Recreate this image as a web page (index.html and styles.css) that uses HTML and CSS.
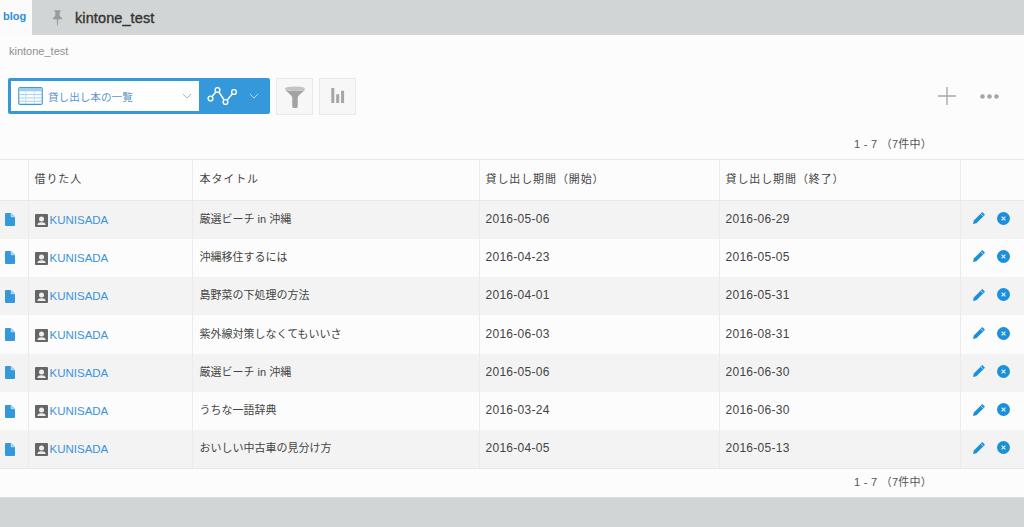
FILE: index.html
```html
<!DOCTYPE html>
<html lang="ja">
<head>
<meta charset="utf-8">
<title>kintone_test</title>
<link rel="stylesheet" href="styles.css">
</head>
<body>
<svg class="defs" width="0" height="0" aria-hidden="true">
  <defs>
    <symbol id="doc" viewBox="0 0 10 13"><path d="M0 1a1 1 0 0 1 1-1h5l4 4v8a1 1 0 0 1-1 1H1a1 1 0 0 1-1-1z" fill="#3498db"/><path d="M6.2 0v3.8H10" fill="#9fd0f0" stroke="#fff" stroke-width=".5"/></symbol>
    <symbol id="user" viewBox="0 0 13 13"><rect width="13" height="13" rx="1" fill="#666"/><circle cx="6.5" cy="5" r="2.5" fill="#eee"/><path d="M2.3 11c.2-2 2-2.700 4.200-2.700s4 .7 4.200 2.700z" fill="#eee"/></symbol>
    <symbol id="pencil" viewBox="0 0 14 14"><path d="M10.300 1l2.700 2.700-8.600 8.500-3.400.8.800-3.400z" fill="#1a90dc"/><path d="M9 2.900l2.100 2.100" stroke="#fff" stroke-width=".7"/></symbol>
    <symbol id="del" viewBox="0 0 13 13"><circle cx="6.500" cy="6.500" r="6.500" fill="#1a90dc"/><path d="M4.600 4.600l3.800 3.800m0-3.800l-3.800 3.800" stroke="#dff0fb" stroke-width="1.200"/></symbol>
  </defs>
</svg>
<header class="topbar">
  <div class="tab-blog">blog</div>
  <svg class="pin" width="11" height="18" viewBox="0 0 14 22"><path d="M3 1h8v1.500L9.800 3.500v5l3 2.500v1.500H8L7.400 21h-.8L6 12.500H1.200V11l3-2.500v-5L3 2.500z" fill="#9a9c9c"/></svg>
  <div class="app-title">kintone_test</div>
</header>
<main class="content">
  <div class="crumb">kintone_test</div>
  <div class="toolbar">
    <div class="view-switch">
      <div class="view-select">
        <svg class="grid-icon" width="25" height="18" viewBox="0 0 26 19"><rect x=".6" y=".6" width="24.800" height="17.800" rx="1.500" fill="#fff" stroke="#3498db" stroke-width="1.200"/><rect x="1" y="1" width="24" height="3.500" fill="#9fcdee"/><path d="M1 8h24M1 11.500h24M1 15h24" stroke="#9fcdee"/><path d="M8 4v14M17 4v14" stroke="#b9dbf3"/></svg>
        <span class="view-name">貸し出し本の一覧</span>
        <svg class="chev" width="10" height="6" viewBox="0 0 12 7"><path d="M1 1l5 5 5-5" fill="none" stroke="#6eb1e4" stroke-width="1"/></svg>
      </div>
      <div class="graph-select">
        <svg width="32" height="20" viewBox="0 0 32 20"><path d="M3 13L10.500 4 18.500 16 27 6" fill="none" stroke="#fff" stroke-width="1.400"/><g fill="#3498db" stroke="#fff" stroke-width="1.400"><circle cx="3.500" cy="12.500" r="2.400"/><circle cx="10.500" cy="4" r="2.400"/><circle cx="18.500" cy="16" r="2.400"/><circle cx="27" cy="6" r="2.400"/></g></svg>
        <svg class="chev" width="10" height="6" viewBox="0 0 12 7"><path d="M1 1l5 5 5-5" fill="none" stroke="#d4e8f7" stroke-width="1"/></svg>
      </div>
    </div>
    <button class="tool-btn" aria-label="filter"><svg width="22" height="23" viewBox="0 0 24 24"><ellipse cx="12" cy="3.500" rx="11" ry="2.500" fill="#c4c4c4"/><path d="M1 4.500C3 6.500 9 11 9 13v9a1.500 1.500 0 0 0 6 0v-9c0-2 6-6.500 8-8.500-4 2-18 2-22 0z" fill="#a3a3a3"/></svg></button>
    <button class="tool-btn" aria-label="graph"><svg width="15" height="16" viewBox="0 0 16 18"><path d="M1 0h3.400v17H1zM6.500 7h3.400v10H6.500zM12 3h3.400v14H12z" fill="#a6a6a6"/></svg></button>
    <div class="tool-right">
      <svg width="18" height="18" viewBox="0 0 18 18"><path d="M9 0v18M0 9h18" stroke="#a6a6a6" stroke-width="1.300"/></svg>
      <svg width="19" height="5" viewBox="0 0 19 5"><g fill="#a6a6a6"><circle cx="2.500" cy="2.500" r="2.300"/><circle cx="9.500" cy="2.500" r="2.300"/><circle cx="16.500" cy="2.500" r="2.300"/></g></svg>
    </div>
  </div>
  <div class="pager pager-top">1 - 7 （7件中）</div>
  <table class="records">
    <colgroup><col class="c0"><col class="c1"><col class="c2"><col class="c3"><col class="c4"><col class="c5"></colgroup>
    <thead>
      <tr><th></th><th>借りた人</th><th class="title">本タイトル</th><th>貸し出し期間（開始）</th><th>貸し出し期間（終了）</th><th></th></tr>
    </thead>
    <tbody>
      <tr><td class="ic"><svg class="doc"><use href="#doc"/></svg></td><td class="who"><span class="person"><svg class="avatar"><use href="#user"/></svg><a>KUNISADA</a></span></td><td class="title">厳選ビーチ in 沖縄</td><td class="date">2016-05-06</td><td class="date">2016-06-29</td><td class="acts"><svg class="pen"><use href="#pencil"/></svg><svg class="x"><use href="#del"/></svg></td></tr>
      <tr><td class="ic"><svg class="doc"><use href="#doc"/></svg></td><td class="who"><span class="person"><svg class="avatar"><use href="#user"/></svg><a>KUNISADA</a></span></td><td class="title">沖縄移住するには</td><td class="date">2016-04-23</td><td class="date">2016-05-05</td><td class="acts"><svg class="pen"><use href="#pencil"/></svg><svg class="x"><use href="#del"/></svg></td></tr>
      <tr><td class="ic"><svg class="doc"><use href="#doc"/></svg></td><td class="who"><span class="person"><svg class="avatar"><use href="#user"/></svg><a>KUNISADA</a></span></td><td class="title">島野菜の下処理の方法</td><td class="date">2016-04-01</td><td class="date">2016-05-31</td><td class="acts"><svg class="pen"><use href="#pencil"/></svg><svg class="x"><use href="#del"/></svg></td></tr>
      <tr><td class="ic"><svg class="doc"><use href="#doc"/></svg></td><td class="who"><span class="person"><svg class="avatar"><use href="#user"/></svg><a>KUNISADA</a></span></td><td class="title">紫外線対策しなくてもいいさ</td><td class="date">2016-06-03</td><td class="date">2016-08-31</td><td class="acts"><svg class="pen"><use href="#pencil"/></svg><svg class="x"><use href="#del"/></svg></td></tr>
      <tr><td class="ic"><svg class="doc"><use href="#doc"/></svg></td><td class="who"><span class="person"><svg class="avatar"><use href="#user"/></svg><a>KUNISADA</a></span></td><td class="title">厳選ビーチ in 沖縄</td><td class="date">2016-05-06</td><td class="date">2016-06-30</td><td class="acts"><svg class="pen"><use href="#pencil"/></svg><svg class="x"><use href="#del"/></svg></td></tr>
      <tr><td class="ic"><svg class="doc"><use href="#doc"/></svg></td><td class="who"><span class="person"><svg class="avatar"><use href="#user"/></svg><a>KUNISADA</a></span></td><td class="title">うちな一語辞典</td><td class="date">2016-03-24</td><td class="date">2016-06-30</td><td class="acts"><svg class="pen"><use href="#pencil"/></svg><svg class="x"><use href="#del"/></svg></td></tr>
      <tr><td class="ic"><svg class="doc"><use href="#doc"/></svg></td><td class="who"><span class="person"><svg class="avatar"><use href="#user"/></svg><a>KUNISADA</a></span></td><td class="title">おいしい中古車の見分け方</td><td class="date">2016-04-05</td><td class="date">2016-05-13</td><td class="acts"><svg class="pen"><use href="#pencil"/></svg><svg class="x"><use href="#del"/></svg></td></tr>
    </tbody>
  </table>
  <div class="pager pager-bottom">1 - 7 （7件中）</div>
</main>
<footer class="foot"></footer>
</body>
</html>
```
FILE: styles.css
```css
* { box-sizing: border-box; }
html, body { margin: 0; padding: 0; height: 100%; }
body {
  width: 1024px;
  height: 527px;
  overflow: hidden;
  background: #d2d5d5;
  font-family: "Liberation Sans", "Noto Sans CJK JP", sans-serif;
  color: #444;
  display: flex;
  flex-direction: column;
}
.defs { position: absolute; }
.topbar { height: 35px; display: flex; align-items: center; background: #d2d5d5; flex: none; }
.tab-blog {
  width: 32px; height: 35px; background: #fbfbfb;
  color: #2a8fdc; font-size: 11px; font-weight: bold;
  padding: 10px 0 0 3px; line-height: 12px;
  flex: none;
}
.pin { margin-left: 20px; flex: none; }
.app-title { margin-left: 12px; font-size: 14.500px; color: #333; font-weight: 400; -webkit-text-stroke: .35px #333; letter-spacing: .1px; }
.content { height: 462px; background: #fcfcfc; flex: none; }
.crumb { padding: 10px 0 0 9px; font-size: 11px; line-height: 13px; color: #8f8f8f; height: 43px; }
.toolbar { display: flex; align-items: center; padding: 0 25px 0 8px; height: 36px; gap: 6px; }
.view-switch { display: flex; width: 262px; height: 36px; background: #3498db; border-radius: 2px; padding: 3px 0 3px 3px; }
.view-select { width: 188px; background: #fff; display: flex; align-items: center; padding: 0 7px 0 7px; color: #5a94cf; font-size: 10.600px; }
.grid-icon { flex: none; }
.view-name { margin-left: 5px; flex: 1; }
.graph-select { flex: 1; display: flex; align-items: center; padding-left: 8px; gap: 10px; }
.tool-btn { width: 37px; height: 37px; background: #f7f7f7; border: 1px solid #e8e8e8; padding: 0; display: flex; align-items: center; justify-content: center; }
.tool-right { margin-left: auto; display: flex; align-items: center; gap: 24px; }
.pager { text-align: right; font-size: 11px; color: #555; letter-spacing: .25px; padding-right: 92px; line-height: 14px; }
.pager-top { height: 45px; padding-top: 23px; }
.records { border-collapse: collapse; width: 1024px; table-layout: fixed; font-size: 11px; color: #444; border-top: 1px solid #e8e8e8; }
.c0 { width: 28px; } .c1 { width: 164px; } .c2 { width: 287px; } .c3 { width: 240px; } .c4 { width: 241px; } .c5 { width: 64px; }
.records th { height: 41px; font-weight: normal; text-align: left; padding: 0 6px 4px; letter-spacing: .9px; font-size: 11px; border-left: 1px solid #ebebeb; border-bottom: 1px solid #e8e8e8; color: #444; }
.records th:first-child, .records td:first-child { border-left: 0; }
.records td { height: 38.300px; padding: 0 6px 4px; border-left: 1px solid #ebebeb; white-space: nowrap; }
.records .title { padding-left: 7px; }
.records td.date { font-size: 12px; letter-spacing: .27px; padding-bottom: 2px; }
.records tbody tr:nth-child(odd) { background: #f3f3f3; }
.records tbody tr:last-child td { border-bottom: 1px solid #e8e8e8; }
.records td.ic { padding: 0 0 0 5px; }
.records td.who { padding-bottom: 0; }
.doc { width: 10px; height: 13px; display: block; }
.person { display: flex; align-items: center; gap: 2px; font-size: 11.500px; }
.person a { color: #3d94da; }
.avatar { width: 13px; height: 13px; flex: none; margin-top: 1px; }
.acts svg { display: inline-block; vertical-align: middle; }
.records td.acts { padding: 0 0 3px 11px; }
.pen { width: 14px; height: 14px; }
.x { width: 13px; height: 13px; margin-left: 11px; }
.pager-bottom { height: 28px; padding-top: 6px; }
.foot { flex: 1; background: #d2d5d5; border-top: 1px solid #ddd; }
```
